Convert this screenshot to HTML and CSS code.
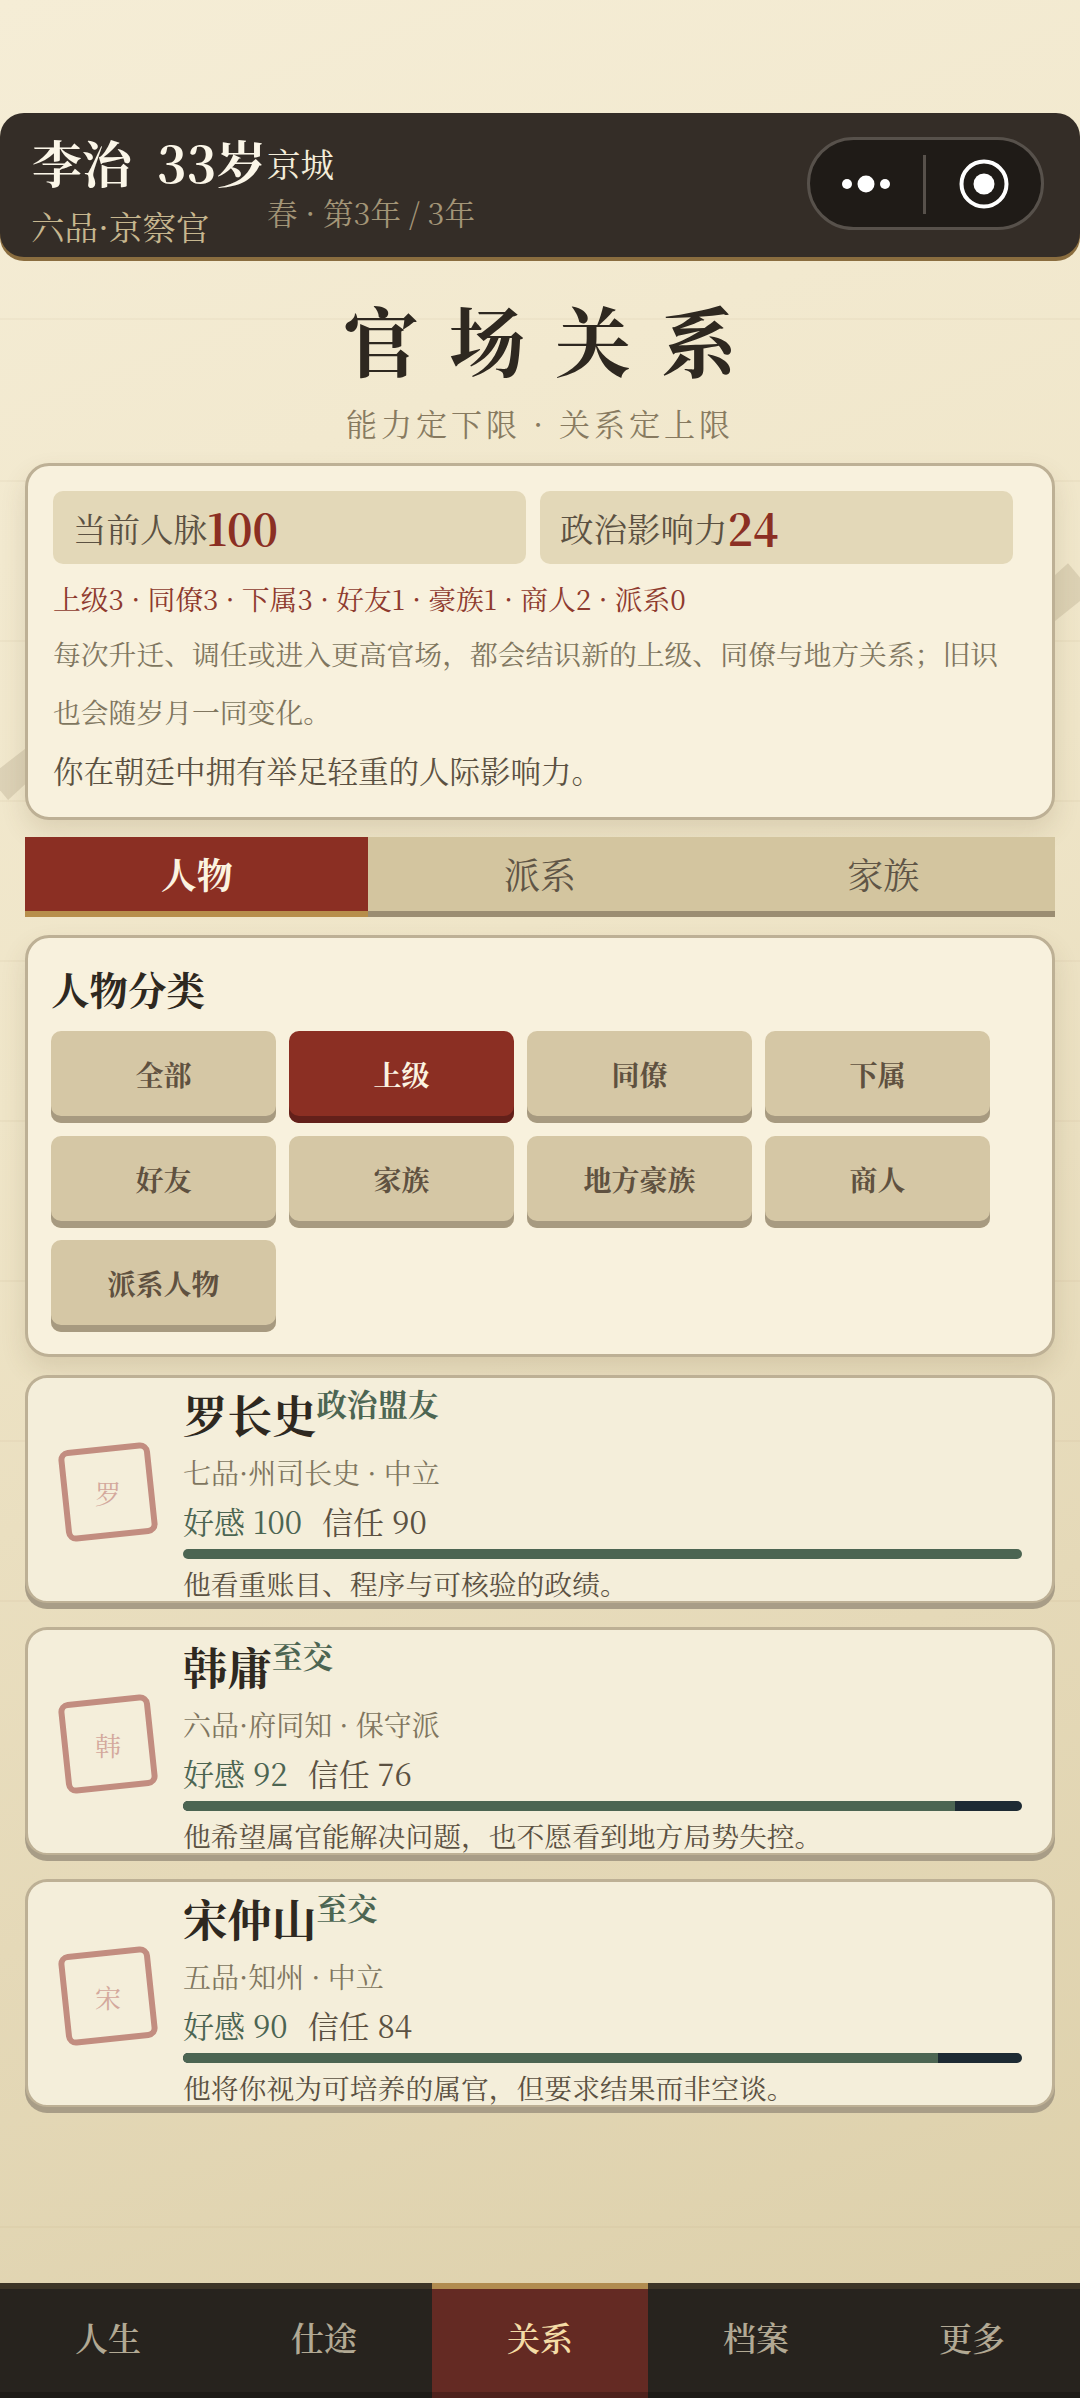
FILE: index.html
```html
<!DOCTYPE html>
<html lang="zh-CN">
<head>
<meta charset="utf-8">
<title>官场关系</title>
<link rel="stylesheet" href="styles.css">
</head>
<body>
<div class="page">
  <div class="rule rule-1"></div><div class="rule rule-2"></div><div class="rule rule-3"></div><div class="rule rule-4"></div><div class="rule rule-5"></div><div class="rule rule-6"></div><div class="rule rule-7"></div><div class="rule rule-8"></div><div class="rule rule-9"></div><div class="rule rule-10"></div>
  <div class="diamond diamond-left"></div>
  <div class="diamond diamond-right"></div>

  <header class="topbar">
    <div class="who">
      <div class="who-main">李治&nbsp; 33岁</div>
      <div class="who-rank">六品·京察官</div>
    </div>
    <div class="where">
      <div class="where-city">京城</div>
      <div class="where-date">春 · 第3年 / 3年</div>
    </div>
    <div class="capsule">
      <svg class="cap-dots" viewBox="0 0 50 18" aria-hidden="true"><circle cx="6" cy="9" r="5" fill="#fff"/><circle cx="25" cy="9" r="8.5" fill="#fff"/><circle cx="44" cy="9" r="5" fill="#fff"/></svg>
      <span class="cap-sep"></span>
      <svg class="cap-target" viewBox="0 0 50 50" aria-hidden="true"><circle cx="25" cy="25" r="22.5" fill="none" stroke="#fff" stroke-width="4"/><circle cx="25" cy="25" r="10.5" fill="#fff"/></svg>
    </div>
  </header>

  <main class="content">
    <h1 class="title">官场关系</h1>
    <p class="subtitle">能力定下限 · 关系定上限</p>

    <section class="card summary">
      <div class="stats">
        <div class="stat">当前人脉<b>100</b></div>
        <div class="stat">政治影响力<b>24</b></div>
      </div>
      <p class="counts">上级3 · 同僚3 · 下属3 · 好友1 · 豪族1 · 商人2 · 派系0</p>
      <p class="desc">每次升迁、调任或进入更高官场，都会结识新的上级、同僚与地方关系；旧识也会随岁月一同变化。</p>
      <p class="verdict">你在朝廷中拥有举足轻重的人际影响力。</p>
    </section>

    <nav class="tabs">
      <div class="tab active">人物</div>
      <div class="tab">派系</div>
      <div class="tab">家族</div>
    </nav>

    <section class="card filter">
      <h2>人物分类</h2>
      <div class="chips">
        <div class="chip">全部</div>
        <div class="chip active">上级</div>
        <div class="chip">同僚</div>
        <div class="chip">下属</div>
        <div class="chip">好友</div>
        <div class="chip">家族</div>
        <div class="chip">地方豪族</div>
        <div class="chip">商人</div>
        <div class="chip">派系人物</div>
      </div>
    </section>

    <article class="person">
      <div class="seal"><span>罗</span></div>
      <div class="info">
        <div class="name-row"><span class="name">罗长史</span><span class="tag">政治盟友</span></div>
        <div class="sub">七品·州司长史 · 中立</div>
        <div class="nums"><span class="fav">好感 100</span><span class="trust">信任 90</span></div>
        <div class="bar"><i style="width:100%"></i></div>
        <div class="quote">他看重账目、程序与可核验的政绩。</div>
      </div>
    </article>

    <article class="person">
      <div class="seal"><span>韩</span></div>
      <div class="info">
        <div class="name-row"><span class="name">韩庸</span><span class="tag">至交</span></div>
        <div class="sub">六品·府同知 · 保守派</div>
        <div class="nums"><span class="fav">好感 92</span><span class="trust">信任 76</span></div>
        <div class="bar"><i style="width:92%"></i></div>
        <div class="quote">他希望属官能解决问题，也不愿看到地方局势失控。</div>
      </div>
    </article>

    <article class="person">
      <div class="seal"><span>宋</span></div>
      <div class="info">
        <div class="name-row"><span class="name">宋仲山</span><span class="tag">至交</span></div>
        <div class="sub">五品·知州 · 中立</div>
        <div class="nums"><span class="fav">好感 90</span><span class="trust">信任 84</span></div>
        <div class="bar"><i style="width:90%"></i></div>
        <div class="quote">他将你视为可培养的属官，但要求结果而非空谈。</div>
      </div>
    </article>
  </main>

  <footer class="bottom-nav">
    <div class="nav-item">人生</div>
    <div class="nav-item">仕途</div>
    <div class="nav-item active">关系</div>
    <div class="nav-item">档案</div>
    <div class="nav-item">更多</div>
  </footer>
</div>
</body>
</html>
```

FILE: styles.css
```css
* { box-sizing: border-box; }
html, body { margin: 0; padding: 0; }
body {
  font-family: "Noto Serif CJK SC", "Liberation Serif", "Noto Sans CJK SC", serif;
  color: #2e2820;
}
.page {
  position: relative;
  width: 1080px;
  height: 2398px;
  overflow: hidden;
  display: flex;
  flex-direction: column;
  padding-top: 113px;
  background: linear-gradient(160deg, #f5edd6 0%, #efe5c8 40%, #e5d9b8 70%, #dccfa9 100%);
}
.rule { position: absolute; left: 0; right: 0; height: 2px; background: rgba(150, 125, 80, .05); }
.rule-1 { top: 318px; } .rule-2 { top: 480px; } .rule-3 { top: 640px; } .rule-4 { top: 800px; }
.rule-5 { top: 960px; } .rule-6 { top: 1120px; } .rule-7 { top: 1280px; } .rule-8 { top: 1440px; }
.rule-9 { top: 1600px; } .rule-10 { top: 2226px; }
.diamond { position: absolute; background: rgba(140, 125, 95, .2); }
.diamond-left { left: 0; top: 745px; width: 30px; height: 58px; clip-path: polygon(0 40%, 100% 0, 100% 60%, 27% 95%, 0 78%); }
.diamond-right { left: 1050px; top: 560px; width: 30px; height: 65px; clip-path: polygon(60% 5%, 100% 27%, 100% 63%, 0 100%, 0 30%); }

.topbar {
  position: relative;
  z-index: 1;
  flex: none;
  height: 144px;
  padding: 13px 36px 0 32px;
  display: flex;
  align-items: flex-start;
  background: #342d27;
  border-radius: 24px;
  box-shadow: 0 4px 0 #8a6d3f;
}
.who { width: 235px; }
.who-main { font-size: 50px; line-height: 70px; font-weight: 700; color: #fbf6e8; white-space: nowrap; }
.who-rank { margin-top: 7px; margin-left: -1px; font-size: 33.5px; line-height: 46px; color: #c7b78f; white-space: nowrap; }
.where { width: 540px; padding-top: 14px; }
.where-city { font-size: 33.5px; line-height: 46px; color: #f3ecd9; }
.where-date { margin-top: 3px; font-size: 30.5px; line-height: 46px; color: #a39577; white-space: nowrap; }
.capsule {
  position: absolute;
  right: 36px;
  top: 24px;
  width: 237px;
  height: 93px;
  background: #1f1b17;
  border: 3px solid #57514b;
  border-radius: 47px;
}
.cap-dots { position: absolute; left: 31px; top: 35px; width: 50px; height: 18px; }
.cap-sep { position: absolute; left: 113px; top: 15px; width: 3px; height: 59px; background: #57514b; }
.cap-target { position: absolute; left: 149px; top: 19px; width: 50px; height: 50px; }

.content { position: relative; z-index: 1; flex: 1; min-height: 0; display: flex; flex-direction: column; padding: 0 25px; }
.title {
  margin: 32px 0 0;
  font-size: 76px;
  line-height: 100px;
  font-weight: 700;
  letter-spacing: 30px;
  text-align: center;
  text-indent: 30px;
  color: #2e2820;
}
.subtitle {
  margin: 7px 0 13px;
  font-size: 31px;
  line-height: 54px;
  letter-spacing: 4px;
  text-align: center;
  color: #877a60;
}
.card {
  flex: none;
  background: #f8f1dd;
  border: 3px solid #bdb095;
  border-radius: 24px;
  box-shadow: 0 12px 26px rgba(100, 80, 40, .14);
}
.summary { height: 357px; padding: 25px 24px 0 25px; }
.stats { display: flex; gap: 14px; padding-right: 15px; }
.stat {
  flex: 1;
  height: 73px;
  padding-left: 20px;
  display: flex;
  align-items: center;
  font-size: 33.5px;
  color: #5b5142;
  background: #e3d8b8;
  border-radius: 10px;
}
.stat b { font-size: 43px; font-weight: 700; color: #8b2f23; }
.counts { margin: 9px 0 0; font-size: 27.8px; line-height: 50px; color: #8e3a2e; white-space: nowrap; }
.desc { margin: 1px 0 0; width: 960px; font-size: 27.8px; line-height: 58px; color: #80765f; }
.verdict { margin: 4px 0 0; font-size: 30.5px; line-height: 52px; color: #5b5142; }

.tabs { flex: none; display: flex; height: 80px; margin-top: 17px; background: #d3c59f; border-bottom: 6px solid #9b8d72; }
.tab {
  flex: 1;
  display: flex;
  align-items: center;
  justify-content: center;
  padding-bottom: 2px;
  font-size: 36px;
  color: #5f5546;
}
.tab.active { color: #fbf3e0; font-weight: 700; background: #8b2f23; margin-bottom: -6px; border-bottom: 6px solid #b78e4b; }

.filter { height: 422px; margin-top: 18px; padding: 22px 24px 0 23px; }
.filter h2 { margin: 0; font-size: 38.5px; line-height: 58px; font-weight: 700; color: #2e2820; }
.chips { display: grid; grid-template-columns: repeat(4, 225px); column-gap: 13px; row-gap: 12.5px; margin-top: 13px; }
.chip {
  height: 92px;
  display: flex;
  align-items: center;
  justify-content: center;
  padding-bottom: 6px;
  font-size: 28px;
  font-weight: 700;
  color: #5f5140;
  background: #d5c7a5;
  border-radius: 10px;
  box-shadow: inset 0 -7px 0 #a79a80;
}
.chip.active { color: #fbf3e0; background: #8b2f23; box-shadow: inset 0 -7px 0 #63201a; }

.person {
  flex: none;
  height: 228px;
  margin-top: 18px;
  display: flex;
  overflow: hidden;
  padding-left: 34px;
  background: #f4eeda;
  border: 3px solid #bdb095;
  border-bottom-width: 2px;
  border-radius: 22px;
  box-shadow: 0 6px 0 #a89d87;
}
.person + .person { margin-top: 24px; }
.seal {
  flex: none;
  width: 92px;
  height: 92px;
  margin-top: 68px;
  display: flex;
  align-items: center;
  justify-content: center;
  border: 6px solid #c28d80;
  border-radius: 10px;
  transform: rotate(-6deg);
}
.seal span { font-size: 26px; color: #d3a89c; transform: rotate(6deg); }
.info { flex: 1; min-width: 0; margin-left: 29px; padding-right: 30px; }
.name-row { display: flex; align-items: flex-start; height: 72px; }
.name { margin-top: 6px; font-size: 44.5px; line-height: 60px; font-weight: 700; color: #2e2820; }
.tag { margin-top: 2px; font-size: 30.5px; line-height: 46px; font-weight: 700; color: #4c6552; }
.sub { font-size: 28px; line-height: 44px; color: #80765f; }
.nums { margin-top: 3px; display: flex; gap: 20px; font-size: 31px; line-height: 48px; }
.fav { color: #4c6552; }
.trust { color: #5b5142; }
.bar { height: 10px; margin-top: 4px; background: #1d2a33; border-radius: 5px; overflow: hidden; }
.bar i { display: block; height: 100%; background: #4c6552; }
.quote { margin-top: 1px; font-size: 27.8px; line-height: 46px; color: #5b5142; white-space: nowrap; }

.bottom-nav {
  position: relative;
  z-index: 1;
  flex: none;
  height: 115px;
  display: flex;
  background: #27231e;
  border-top: 6px solid #3d3527;
  box-shadow: inset 0 -6px 0 #1e1b17;
}
.nav-item {
  flex: 1;
  display: flex;
  align-items: center;
  justify-content: center;
  padding-bottom: 15px;
  font-size: 33px;
  font-weight: 600;
  color: #b2a994;
}
.nav-item.active {
  margin-top: -6px;
  color: #f4dca6;
  background: #642a23;
  border-top: 6px solid #b18c50;
  box-shadow: inset 0 -6px 0 #4e211c;
}
```
